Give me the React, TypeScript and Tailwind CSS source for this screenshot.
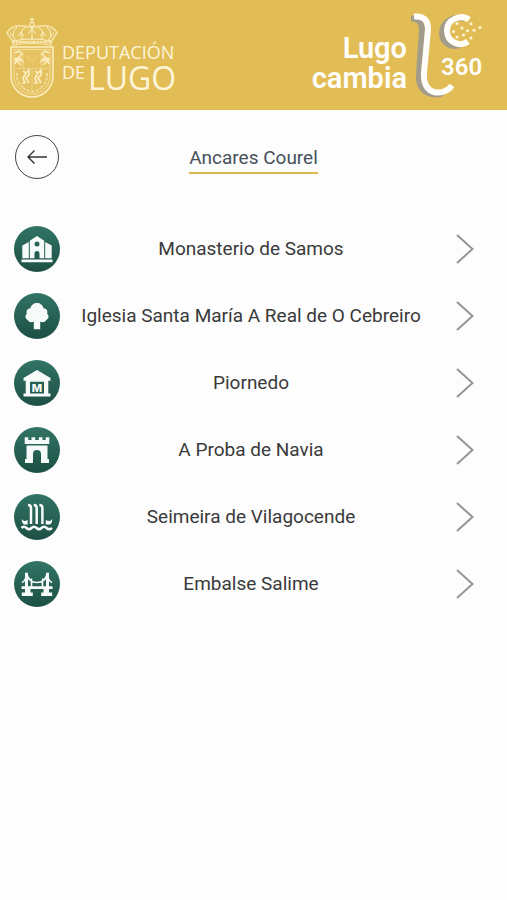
import type { ReactNode } from "react";

interface Place {
  name: string;
  icon: ReactNode;
}

const PLACES: Place[] = [
  {
    name: "Monasterio de Samos",
    icon: (
      <>
        <path
          fillRule="evenodd"
          d="M23 10l7.200 4.700V32.200h-4.700v-4.700a2.500 2.500 0 0 0-5 0v4.700h-4.700V14.700zM23 15.600a2.500 2.500 0 1 0 0 5 2.500 2.500 0 0 0 0-5z"
        />
        <path d="M8.300 19.500l6.500-3.500v16.200H8.300zM37.700 19.500L31.200 16v16.200h6.500zM7.500 33.600h31v2.700h-31z" />
      </>
    ),
  },
  {
    name: "Iglesia Santa María A Real de O Cebreiro",
    icon: (
      <path d="M19.800 36.300v-7.600c-2.300 1-5.300.2-6-1.800-2.700-.9-3.100-4.500-.9-6.200-1.100-2.800.6-5.400 3.600-5.500C17 12 20 10 23 10s5.800 2 6.500 5.200c3 .1 4.700 2.700 3.600 5.500 2.200 1.700 1.800 5.300-.9 6.200-.7 2-3.700 2.800-6 1.800v7.600z" />
    ),
  },
  {
    name: "Piornedo",
    icon: (
      <>
        <path d="M23 10l13.500 8v2.700h-27V18zM11.700 20h4.300v14h-4.300zM30 20h4.300v14H30zM15 20h16v1.700H15zM9.500 33.500h27v3h-27z" />
        <text x="23" y="31.500" textAnchor="middle" fontSize="11" fontWeight="800" fontFamily="Inter, sans-serif">
          M
        </text>
      </>
    ),
  },
  {
    name: "A Proba de Navia",
    icon: (
      <path d="M10.700 10.300h3.600V13h3.200v-2.700h3.700V13h3.600v-2.700h3.700V13h3.200v-2.700h3.600V17H10.700zM12.500 18.500h21V32H35v4h-8V27a4 4 0 0 0-8 0v9h-8v-4h1.500z" />
    ),
  },
  {
    name: "Seimeira de Vilagocende",
    icon: (
      <>
        <g fill="none" stroke="currentColor" strokeWidth="2.500">
          <path d="M14 11q3 0 3 3v16M19.700 11q3 0 3 3v16M25.400 11q3 0 3 3v16" />
          <path d="M7.500 34q2.500-2.500 5 0t5 0 5 0 5 0 5 0 5.500 0" />
        </g>
        <path d="M7.700 25q2 3.500 6 1v4.500H10q-2-1-2.300-5.500zM38.300 25q-2 3.500-6.500 1v4.500H36q2-1 2.300-5.500z" />
      </>
    ),
  },
  {
    name: "Embalse Salime",
    icon: (
      <>
        <path d="M11 11.700h3V28h2.500v4H11zM32 11.700h3V32h-5.500v-4H32zM7.500 25.200h31V28h-31zM7.800 31.500h11V35h-11zM27.200 31.500h11V35h-11z" />
        <path
          fill="none"
          stroke="currentColor"
          strokeWidth="1.600"
          d="M13 13.500q2 8 10 8t10-8M12 15q-.5 5-4 6.500M34 15q.5 5 4 6.500M17.500 17.500V26M28.500 17.500V26"
        />
      </>
    ),
  },
];

function DeputacionLogo() {
  return (
    <svg viewBox="6 12 172 90" className="h-[90px] w-[172px] shrink-0" role="img" aria-label="Deputación de Lugo">
      <g fill="none" stroke="#fbeec0" transform="translate(6 18)">
        <path d="M26 1v6M23.500 3.500h5" strokeWidth="1.200" />
        <circle cx="26" cy="8.500" r="2.200" strokeWidth="1.200" />
        <path d="M7 26Q4 21 1 17q3-6 10-7 8-1 15 2 7-3 15-2 7 1 10 7-3 4-6 9z" fill="#fbeec0" fillOpacity=".15" strokeWidth="1.500" strokeDasharray="2 .7" />
        <path d="M10 25Q4 18 11 11M17 24q-5-9 3-13M35 24q5-9-3-13M42 25q6-7-1-14M26 11v13" strokeWidth="1" />
        <path d="M12 20l3-4 3 4M22 18l4-5 4 5M34 20l3-4 3 4M4 17l4 4M48 17l-4 4" strokeWidth="1" />
        <path d="M7 25q19-4 38 0v4q-19-3-38 0z" strokeWidth="1.200" />
        <path d="M10 27q16-3 32 0" strokeWidth="1.500" strokeDasharray="1.500 2" />
        <path d="M5 31h42v29a21 21 0 0 1-42 0z" fill="#fbeec0" fillOpacity=".1" strokeWidth="1.500" />
        <path d="M8 33.500h36V60a18 18 0 0 1-36 0z" strokeWidth=".8" opacity=".8" />
        <path d="M17 34v18M35 34v18M8 52.500h36M20 39q6 12 12 0M26 53v24" strokeWidth=".8" opacity=".5" />
        <path d="M9 37l4-2 3 3-3 3 3 4-5-2-2 5M14 41l-5 2 4 4 2 2M43 37l-4-2-3 3 3 3-3 4 5-2 2 5M38 41l5 2-4 4-2 2" strokeWidth="1.700" />
        <path d="M17 55l3 2 3-3v5l-3 3 3 5M29 55l3 2 3-3v5l-3 3 3 5M20 57l-3 5 2 5h-3M32 57l-3 5 2 5h-3" strokeWidth="1.700" />
        <path d="M11 57q-1 10 7 15M41 57q1 10-7 15M17 72q9 7 18 0" strokeWidth="1.700" strokeDasharray="3 1.500" opacity=".7" />
      </g>
      <g fill="#fdf5d8" fontFamily="'Open Sans', sans-serif">
        <text x="62" y="61" fontSize="18">
          DEPUTACIÓN
        </text>
        <text x="62" y="81" fontSize="18">
          DE
        </text>
        <text x="88" y="92" fontSize="32">
          LUGO
        </text>
      </g>
    </svg>
  );
}

function LugoCambiaLogo() {
  return (
    <svg viewBox="308 10 176 92" className="h-[92px] w-[176px] shrink-0" role="img" aria-label="Lugo cambia 360">
      <g fill="#fffefa" fontFamily="Roboto, sans-serif" fontWeight="600">
        <text x="408" y="59" fontSize="29" textAnchor="end">
          Lugo
        </text>
        <text x="408" y="89" fontSize="29" textAnchor="end">
          cambia
        </text>
        <text x="442" y="76" fontSize="24">
          360
        </text>
      </g>
      <g fill="none" stroke="#a39c8a" strokeWidth="6">
        <path d="M412 19.500c9 0 11 5 11 12l-3 44c-1 13 6 20 17 20q4 0 7-2" />
        <path d="M466 20C456 16 443 22 443 34c0 10 9 15 18 12" />
      </g>
      <g fill="none" stroke="#fffefa" strokeWidth="6">
        <path d="M415 17.500c11-1 14 5 14 13l-4 43c-1 13 5 20 14 20 7 0 11-3 14-7" />
        <path d="M470 20.500C462 15 448 20 448 31.500c0 12 13 17 21 11" />
      </g>
      <g fill="#fdf6da">
        <circle cx="466" cy="20" r="1.500" />
        <circle cx="458" cy="24.500" r="1.500" />
        <circle cx="472" cy="24.700" r="1.500" />
        <circle cx="463" cy="29" r="1.500" />
        <circle cx="481" cy="28.500" r="1.500" />
        <circle cx="454.500" cy="32.500" r="1.500" />
        <circle cx="468.500" cy="31.700" r="1.500" />
        <circle cx="475" cy="31.300" r="1.500" />
        <circle cx="464.500" cy="36" r="1.500" />
        <circle cx="458" cy="38" r="1.500" />
        <circle cx="472" cy="39" r="1.500" />
      </g>
    </svg>
  );
}

export default function App() {
  return (
    <div className="min-h-screen bg-[#fdfdfd] font-[Roboto,sans-serif] text-[19px] text-[#3a3a3a]">
      <header className="flex h-[110px] items-center justify-between bg-[#e2bd55] pr-6 pl-1.5">
        <DeputacionLogo />
        <LugoCambiaLogo />
      </header>

      <main>
        <div className="grid grid-cols-[44px_1fr_44px] items-center px-[15px] pt-[25px]">
          <button type="button" aria-label="Volver" className="flex size-11 items-center justify-center rounded-full border border-[#444]">
            <svg viewBox="0 0 20 14" className="h-[14px] w-5" fill="none" stroke="#333" strokeWidth="1.400" aria-hidden>
              <path d="M20 7H1M7.500.5L1 7l6.500 6.500" />
            </svg>
          </button>
          <h1 className="justify-self-center border-b-2 border-[#dcb84f] pt-1 leading-7 text-[#46505a]">Ancares Courel</h1>
        </div>

        <ul className="flex flex-col gap-[21px] pt-[47px] pr-[33px] pl-3.5">
          {PLACES.map((place) => (
            <li key={place.name}>
              <a href="#" className="grid grid-cols-[46px_1fr_32px] items-center">
                <span className="flex size-[46px] rounded-full bg-linear-to-b from-[#317465] to-[#1d5045] text-[#f6fbf9]">
                  <svg viewBox="0 0 46 46" className="size-full" fill="currentColor" aria-hidden>
                    {place.icon}
                  </svg>
                </span>
                <span className="text-center">{place.name}</span>
                <svg viewBox="0 0 18 30" className="h-[30px] w-[18px] justify-self-end" fill="none" stroke="#959595" strokeWidth="2" aria-hidden>
                  <path d="M1 1l15.500 14L1 29" />
                </svg>
              </a>
            </li>
          ))}
        </ul>
      </main>
    </div>
  );
}
